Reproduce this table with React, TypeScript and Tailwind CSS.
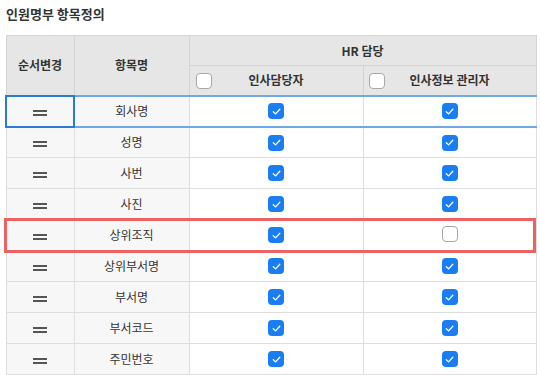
import React from 'react';

const rows = [
  { name: '회사명', hr: true, info: true },
  { name: '성명', hr: true, info: true },
  { name: '사번', hr: true, info: true },
  { name: '사진', hr: true, info: true },
  { name: '상위조직', hr: true, info: false },
  { name: '상위부서명', hr: true, info: true },
  { name: '부서명', hr: true, info: true },
  { name: '부서코드', hr: true, info: true },
  { name: '주민번호', hr: true, info: true },
];

function Check({ checked }: { checked: boolean }) {
  if (!checked) {
    return <span className="inline-block w-[16px] h-[16px] rounded-[4px] border border-[#a8a8a8] bg-white align-middle" />;
  }
  return (
    <span className="inline-flex w-[16px] h-[16px] rounded-[4px] bg-[#1a7ef2] items-center justify-center align-middle">
      <svg width="11" height="11" viewBox="0 0 12 12" fill="none">
        <path d="M2.5 6.3 L5 8.6 L9.6 3.6" stroke="white" strokeWidth="1.4" strokeLinecap="round" strokeLinejoin="round" />
      </svg>
    </span>
  );
}

function Handle() {
  return (
    <span className="inline-flex flex-col gap-[2px] w-[14px] align-middle">
      <span className="h-[2px] bg-[#555]" />
      <span className="h-[2px] bg-[#555]" />
    </span>
  );
}

export default function App() {
  return (
    <div
      className="w-[540px] h-[375px] overflow-hidden bg-white text-[#333] px-[5px] pt-[6px]"
      style={{ fontFamily: '"Noto Sans CJK KR", "Noto Sans", sans-serif' }}
    >
      <div className="text-[13px] font-bold leading-[16px] pl-[1px]">인원명부 항목정의</div>
      <div className="relative mt-[13px] w-[530px]">
        <table className="w-[530px] border-collapse table-fixed text-[12px]">
          <colgroup>
            <col className="w-[68px]" />
            <col className="w-[115px]" />
            <col className="w-[174px]" />
            <col className="w-[173px]" />
          </colgroup>
          <thead>
            <tr className="h-[30px] bg-[#e6e6e6]">
              <th rowSpan={2} className="border border-[#d4d4d4] font-bold">순서변경</th>
              <th rowSpan={2} className="border border-[#d4d4d4] font-bold">항목명</th>
              <th colSpan={2} className="border border-[#d4d4d4] font-bold">HR 담당</th>
            </tr>
            <tr className="h-[30px] bg-[#e6e6e6]">
              <th className="border border-[#d4d4d4] font-bold relative">
                <span className="absolute left-[6px] top-[7px] flex"><Check checked={false} /></span>
                인사담당자
              </th>
              <th className="border border-[#d4d4d4] font-bold relative">
                <span className="absolute left-[5px] top-[7px] flex"><Check checked={false} /></span>
                인사정보 관리자
              </th>
            </tr>
          </thead>
          <tbody>
            {rows.map((r, i) => {
              const focus = i === 0;
              const edge = focus ? 'border-y-[2px] border-y-[#6fa8e2]' : 'border-y border-y-[#dedede]';
              return (
                <tr key={r.name} className="h-[31px]">
                  <td
                    className={`bg-[#f7f7f7] text-center ${
                      focus ? 'border-[2px] border-[#2a7bd6]' : 'border border-[#dedede]'
                    }`}
                  >
                    <Handle />
                  </td>
                  <td className={`bg-[#f7f7f7] text-center border-x border-x-[#dedede] ${edge}`}>{r.name}</td>
                  <td className={`bg-white text-center border-x border-x-[#dedede] ${edge}`}>
                    <span className="inline-flex pt-[2px]"><Check checked={r.hr} /></span>
                  </td>
                  <td className={`bg-white text-center border-x border-x-[#dedede] ${edge}`}>
                    <span className="inline-flex pt-[2px]"><Check checked={r.info} /></span>
                  </td>
                </tr>
              );
            })}
          </tbody>
        </table>
        {/* highlight box over the 상위조직 row */}
        <div className="absolute left-[-1px] top-[183px] w-[532px] h-[35px] border-[3px] border-[#ec6262] pointer-events-none" />
      </div>
    </div>
  );
}
